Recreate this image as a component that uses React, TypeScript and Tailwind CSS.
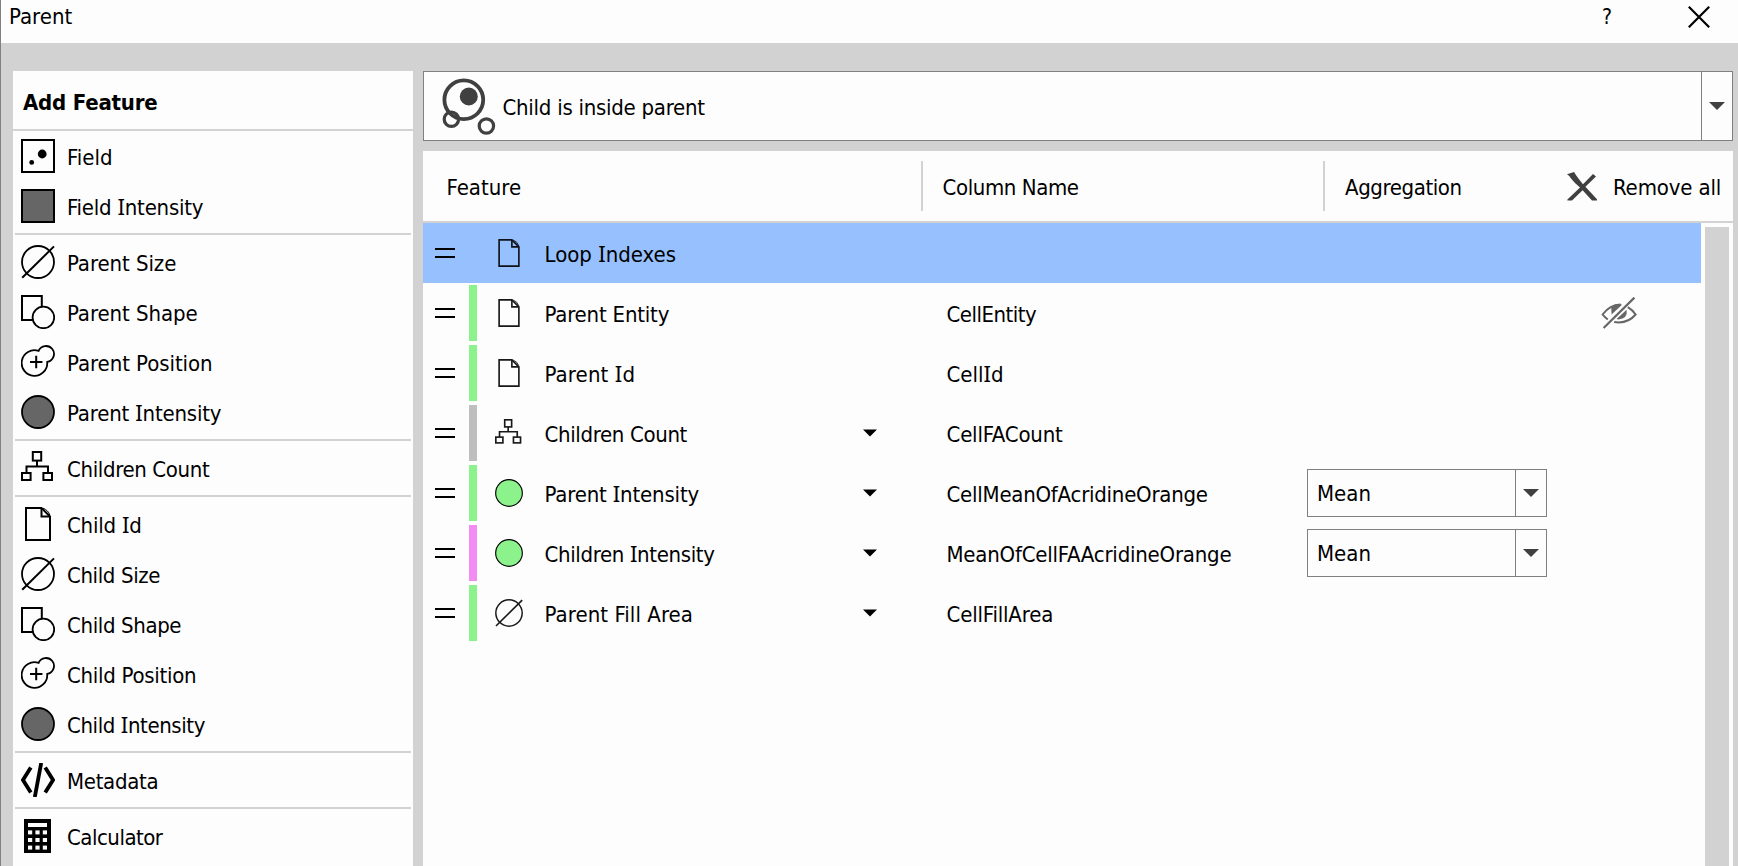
import React from "react";
import clsx from "clsx";

function Label({ text, className }: { text: string; className?: string }) {
  return (
    <span className={clsx("whitespace-pre", className)}>
      {text.split(/(I)/).map((part, i) =>
        part === "I" ? (
          <span key={i} className="font-['Noto_Sans',sans-serif] leading-none">
            I
          </span>
        ) : (
          part
        ),
      )}
    </span>
  );
}

type IconName =
  | "field"
  | "square"
  | "size"
  | "shape"
  | "position"
  | "circle"
  | "tree"
  | "page"
  | "code"
  | "calculator"
  | "green";

function Icon({ name, className }: { name: IconName; className?: string }) {
  return (
    <svg viewBox="0 0 34 34" className={clsx("shrink-0", className)} fill="none" stroke="currentColor" strokeWidth="2">
      {name === "field" && (
        <>
          <rect x="1" y="1" width="32" height="32" />
          <circle cx="21.2" cy="15" r="4.4" fill="currentColor" stroke="none" />
          <circle cx="10.7" cy="23.4" r="2.4" fill="currentColor" stroke="none" />
        </>
      )}
      {name === "square" && <rect x="1" y="1" width="32" height="32" fill="#666666" />}
      {name === "circle" && <circle cx="17" cy="17" r="16" fill="#666666" strokeWidth="1.8" />}
      {name === "green" && <circle cx="17" cy="17" r="16.2" fill="#8cf38c" strokeWidth="1.4" />}
      {name === "size" && (
        <>
          <circle cx="17" cy="17" r="16" strokeWidth="1.8" />
          <path d="M1.2 32.8 33 1.4" />
        </>
      )}
      {name === "shape" && (
        <>
          <path d="M20.8 11.5V1H1V25H11.5" />
          <circle cx="22.4" cy="22.4" r="10.8" strokeWidth="1.8" />
        </>
      )}
      {name === "position" && (
        <>
          <path d="M17.6 5.9A12.8 12.8 0 1 0 26.2 16.9A8 8 0 1 0 17.6 5.9Z" strokeWidth="1.8" />
          <path d="M15.2 10.8V23.2M9 17H21.4" />
        </>
      )}
      {name === "tree" && (
        <>
          <rect x="11.8" y="1" width="8.4" height="8.6" />
          <rect x="1" y="22" width="8.6" height="7" />
          <rect x="22.4" y="22" width="8.6" height="7" />
          <path d="M16 9.6V15.5M5.5 22V15.5H27V22" />
        </>
      )}
      {name === "page" && (
        <>
          <path d="M5 1H20.5L29 9.5V33H5Z" />
          <path d="M20.5 1V9.5H29" />
          <path d="M22 1.2Q27.5 3.4 28.8 8" strokeWidth="1" />
        </>
      )}
      {name === "code" && (
        <>
          <path d="M9.8 4.4 2 17 9.8 29.6M24.2 4.4 32 17 24.2 29.6" strokeWidth="3.8" />
          <path d="M20.2 0 13.8 34" strokeWidth="3.8" />
        </>
      )}
      {name === "calculator" && (
        <g fill="#fdfdfd" stroke="none">
          <rect x="3" y="0" width="27" height="34" fill="currentColor" />
          <rect x="7" y="4" width="19" height="4" />
          {[11.4, 19, 26.6].map((y) =>
            [7, 14.4, 21.8].map((x) => <rect key={`${x}-${y}`} x={x} y={y} width="4.2" height="4" />),
          )}
        </g>
      )}
    </svg>
  );
}

type FeatureEntry = { icon: IconName; text: string; tracking?: string };

const featureGroups: FeatureEntry[][] = [
  [
    { icon: "field", text: "Field" },
    { icon: "square", text: "Field Intensity", tracking: "tracking-[-0.22px]" },
  ],
  [
    { icon: "size", text: "Parent Size", tracking: "tracking-[-0.08px]" },
    { icon: "shape", text: "Parent Shape", tracking: "tracking-[-0.08px]" },
    { icon: "position", text: "Parent Position", tracking: "tracking-[-0.06px]" },
    { icon: "circle", text: "Parent Intensity", tracking: "tracking-[-0.18px]" },
  ],
  [{ icon: "tree", text: "Children Count", tracking: "tracking-[-0.36px]" }],
  [
    { icon: "page", text: "Child Id", tracking: "tracking-[-0.22px]" },
    { icon: "size", text: "Child Size", tracking: "tracking-[-0.38px]" },
    { icon: "shape", text: "Child Shape", tracking: "tracking-[-0.37px]" },
    { icon: "position", text: "Child Position", tracking: "tracking-[-0.28px]" },
    { icon: "circle", text: "Child Intensity", tracking: "tracking-[-0.4px]" },
  ],
  [{ icon: "code", text: "Metadata", tracking: "tracking-[-0.3px]" }],
  [{ icon: "calculator", text: "Calculator", tracking: "tracking-[-0.5px]" }],
];

type Row = {
  icon: IconName;
  name: string;
  nameTracking?: string;
  column?: string;
  columnTracking?: string;
  bar?: string;
  menu?: boolean;
  aggregation?: string;
  hidden?: boolean;
  selected?: boolean;
};

const rows: Row[] = [
  { icon: "page", name: "Loop Indexes", selected: true },
  { icon: "page", name: "Parent Entity", nameTracking: "tracking-[-0.2px]", column: "CellEntity", columnTracking: "tracking-[-0.5px]", bar: "bg-[#8cf38c]", hidden: true },
  { icon: "page", name: "Parent Id", nameTracking: "tracking-[0.12px]", column: "CellId", bar: "bg-[#8cf38c]" },
  { icon: "tree", name: "Children Count", nameTracking: "tracking-[-0.35px]", column: "CellFACount", columnTracking: "tracking-[-0.2px]", bar: "bg-[#bebebe]", menu: true },
  { icon: "green", name: "Parent Intensity", nameTracking: "tracking-[-0.17px]", column: "CellMeanOfAcridineOrange", columnTracking: "tracking-[-0.24px]", bar: "bg-[#8cf38c]", menu: true, aggregation: "Mean" },
  { icon: "green", name: "Children Intensity", nameTracking: "tracking-[-0.35px]", column: "MeanOfCellFAAcridineOrange", columnTracking: "tracking-[-0.22px]", bar: "bg-[#f28cf2]", menu: true, aggregation: "Mean" },
  { icon: "size", name: "Parent Fill Area", nameTracking: "tracking-[0.06px]", column: "CellFillArea", columnTracking: "tracking-[-0.18px]", bar: "bg-[#8cf38c]", menu: true },
];

function Arrow({ className }: { className?: string }) {
  return (
    <svg viewBox="0 0 16 8" className={className} fill="currentColor">
      <path d="M0 0H16L8 8Z" />
    </svg>
  );
}

function TitleBar() {
  return (
    <header className="flex h-[43px] shrink-0 bg-[#fdfdfd] pl-[8px] leading-[33px]">
      <Label text="Parent" />
      <span className="mr-px ml-auto w-[12px] pt-px text-center text-[21px]">?</span>
      <svg viewBox="0 0 22 22" className="mt-[6px] mr-[28px] ml-[74px] size-[22px]" fill="none" stroke="black" strokeWidth="2.2">
        <path d="M.8.8 21.2 21.2M21.2.8.8 21.2" />
      </svg>
    </header>
  );
}

function FeaturePanel() {
  return (
    <aside className="flex w-[400px] shrink-0 flex-col bg-[#fdfdfd]">
      <h2 className="flex h-[60px] shrink-0 items-center border-b-2 border-[#d2d2d2] pt-[6px] pl-[10px] font-bold tracking-[-0.2px]">
        Add Feature
      </h2>
      {featureGroups.map((group, i) => (
        <ul key={i} className={clsx(i > 0 && "mx-[2px] mt-[2px] border-t-2 border-[#d2d2d2] pt-[2px]")}>
          {group.map((entry) => (
            <li key={entry.text} className={clsx("flex h-[50px] items-center gap-3", i > 0 ? "pl-[6px]" : "pl-2")}>
              <Icon name={entry.icon} className="size-[34px]" />
              <Label text={entry.text} className={clsx("pt-[3px]", entry.tracking)} />
            </li>
          ))}
        </ul>
      ))}
    </aside>
  );
}

function RelationSelect() {
  return (
    <div className="flex h-[70px] shrink-0 border border-[#808080] bg-[#fdfdfd]">
      <div className="flex flex-1 items-center pl-[18px]">
        <svg viewBox="0 0 54 58" className="mb-px h-[58px] w-[54px]" fill="none" stroke="#404040" strokeWidth="3.2">
          <circle cx="21.8" cy="22.8" r="19.4" strokeWidth="3.8" />
          <circle cx="26.8" cy="19.5" r="9" fill="#404040" stroke="none" />
          <circle cx="9.4" cy="42.2" r="7.2" />
          <circle cx="44.4" cy="49" r="7.2" />
        </svg>
        <Label text="Child is inside parent" className="pt-[3px] pl-[6.5px] tracking-[-0.26px]" />
      </div>
      <div className="flex w-[31px] items-center justify-center border-l border-[#808080] text-[#404040]">
        <Arrow className="h-[8px] w-[16px]" />
      </div>
    </div>
  );
}

function TableHeader() {
  return (
    <div className="flex h-[72px] shrink-0 items-center border-b-2 border-[#d2d2d2]">
      <Label text="Feature" className="w-[498px] pt-[3px] pl-[23.5px]" />
      <div className="flex h-[50px] w-[402px] items-center border-l-2 border-[#d2d2d2] pl-[19.5px]">
        <Label text="Column Name" className="pt-[3px] tracking-[-0.4px]" />
      </div>
      <div className="flex h-[50px] flex-1 items-center border-l-2 border-[#d2d2d2] pl-[20px]">
        <Label text="Aggregation" className="w-[222px] pt-[3px] tracking-[-0.4px]" />
        <svg viewBox="0 0 30 29" className="h-[29px] w-[30px]" fill="#404040">
          <path d="M0 2.2 7 0Q10 5 16 12.2L26 2 29 4.4 18.4 14.8 30 27.2V28.4H25L15.6 18.2 5 28.4H.4V27.4L13 15.4Q7 10.5 4 6.5 2.5 3.5 0 2.2Z" />
        </svg>
        <Label text="Remove all" className="pt-[3px] pl-[16px] tracking-[-0.15px]" />
      </div>
    </div>
  );
}

function HiddenEye() {
  return (
    <svg viewBox="0 0 36 32" className="ml-auto mr-[64px] h-[32px] w-[36px]" fill="none" stroke="#666666" strokeWidth="2">
      <path d="M6.8 22.5Q3.5 20 1.6 17.5Q9 7.3 19.5 7.4" />
      <path d="M13.2 25Q26.5 27.2 34.6 17.5Q31.5 13 26.8 10.2" />
      <path d="M20.5 7.2Q14 6 10.2 10.4L10.6 17.6 20.5 8.2Z" fill="#666666" stroke="none" />
      <path d="M25.6 12.8Q27 21.8 17.4 22.4L15.6 22Z" fill="#666666" stroke="none" />
      <path d="M2.6 31 33.4.6" strokeWidth="2.2" />
    </svg>
  );
}

function TableRow({ row }: { row: Row }) {
  return (
    <div className={clsx("flex h-[60px] items-center pl-3", row.selected && "bg-[#96c1fe]")}>
      <div className="h-[10px] w-[20px] border-y-2 border-black" />
      <div className={clsx("ml-[14px] h-[56px] w-2", row.bar)} />
      <div className="flex w-[67.5px] pl-[18px]">
        <Icon name={row.icon} className={clsx("size-[28px]", row.icon !== "green" && "opacity-90")} />
      </div>
      <Label text={row.name} className={clsx("w-[318.5px] pt-[3px]", row.nameTracking)} />
      <div className="w-[83.5px]">{row.menu && <Arrow className="mb-px h-[8px] w-[14px]" />}</div>
      <Label text={row.column ?? ""} className={clsx("w-[360.5px] pt-[3px]", row.columnTracking)} />
      {row.aggregation && (
        <div className="flex h-[48px] w-[240px] border border-[#808080]">
          <span className="flex flex-1 items-center pt-[2px] pl-[9px]">{row.aggregation}</span>
          <span className="flex w-[31px] items-center justify-center border-l border-[#808080] text-[#404040]">
            <Arrow className="h-[8px] w-[16px]" />
          </span>
        </div>
      )}
      {row.hidden && <HiddenEye />}
    </div>
  );
}

export default function App() {
  return (
    <div className="flex h-screen flex-col overflow-hidden border-l border-[#808080] bg-[#d2d2d2] font-['DejaVu_Sans_Condensed','DejaVu_Sans',sans-serif] text-[22px] leading-[28px] text-black">
      <TitleBar />
      <main className="flex min-h-0 flex-1 gap-[10px] pt-[28px] pr-[5px] pl-3">
        <FeaturePanel />
        <section className="flex min-w-0 flex-1 flex-col gap-[10px]">
          <RelationSelect />
          <div className="flex min-h-0 flex-1 flex-col bg-[#fdfdfd]">
            <TableHeader />
            <div className="flex min-h-0 flex-1">
              <div className="w-[1278px]">
                {rows.map((row) => (
                  <TableRow key={row.name} row={row} />
                ))}
              </div>
              <div className="mt-1 ml-1 w-6 bg-[#d2d2d2]" />
            </div>
          </div>
        </section>
      </main>
    </div>
  );
}
